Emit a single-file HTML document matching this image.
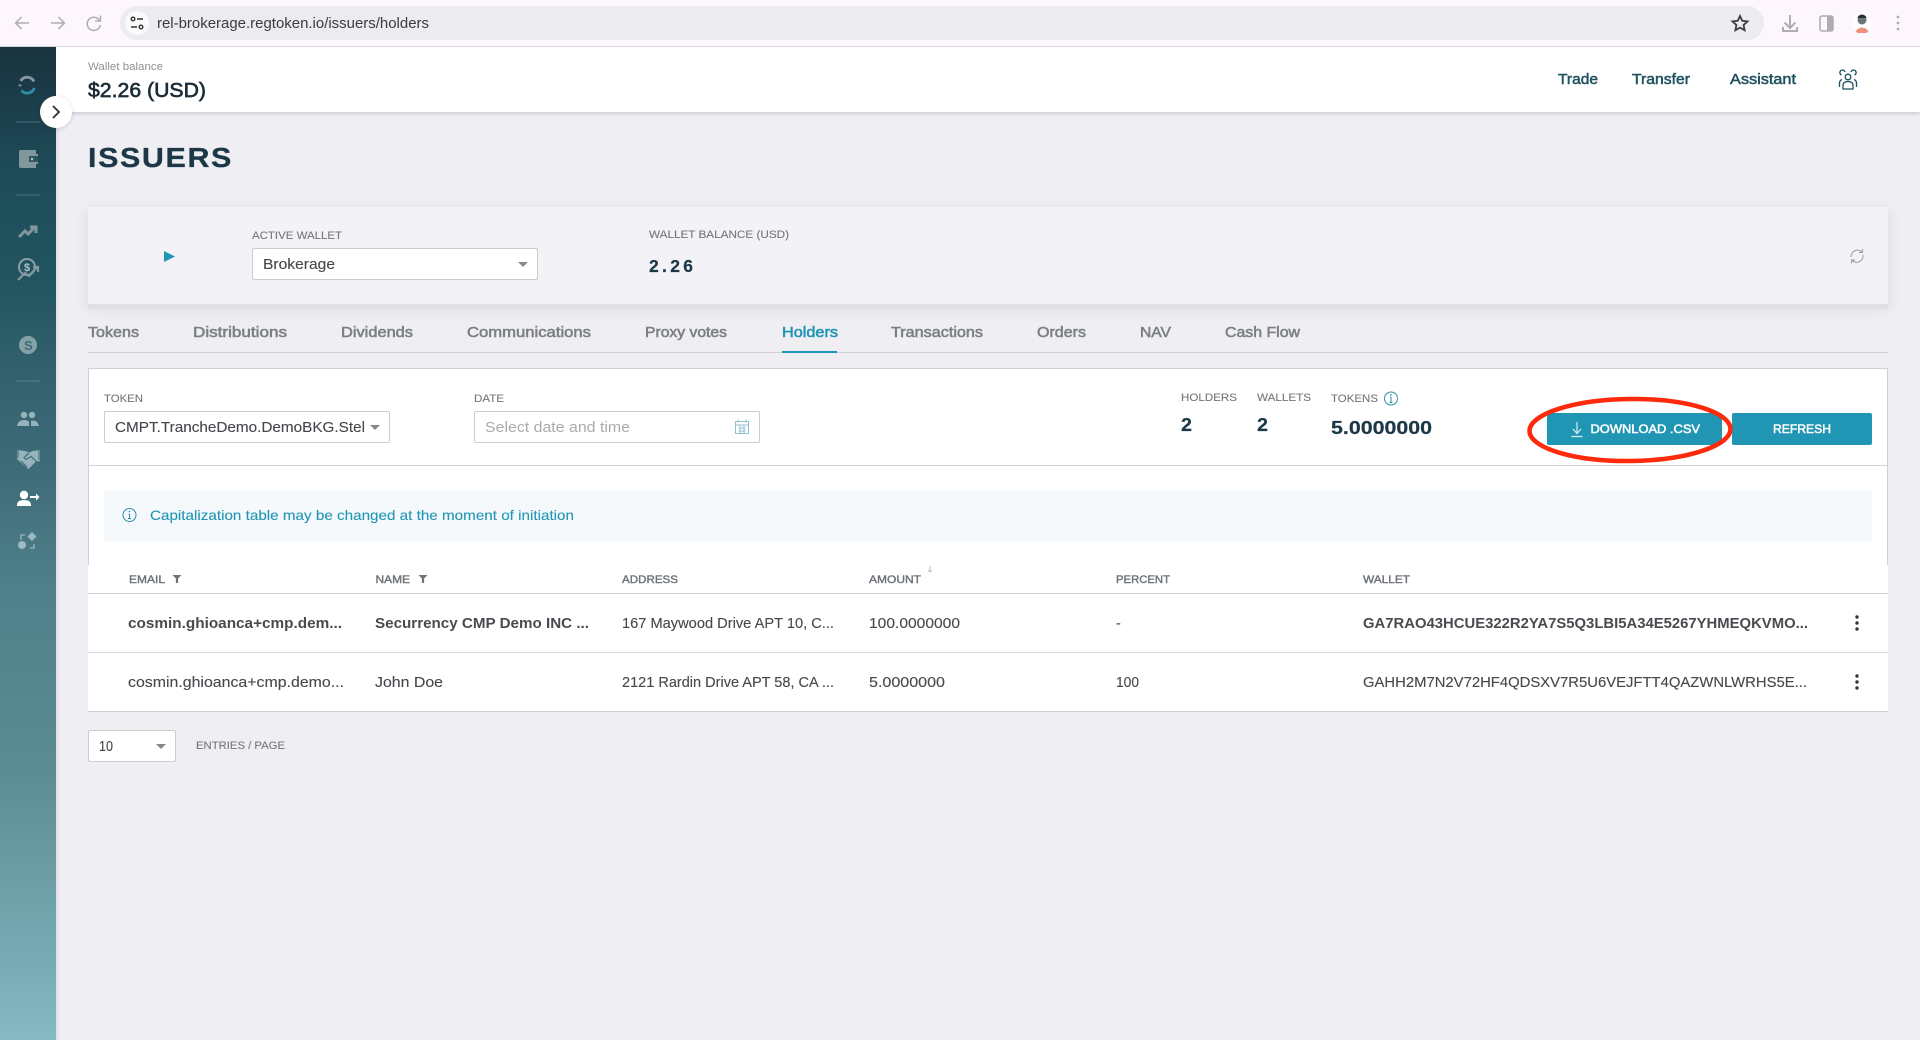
<!DOCTYPE html>
<html lang="en">
<head>
<meta charset="utf-8">
<title>Issuers - Holders</title>
<style>
html,body{margin:0;padding:0;width:1920px;height:1040px;overflow:hidden;background:#eeeef3;font-family:"Liberation Sans",sans-serif}
.a{position:absolute;box-sizing:border-box}
svg{position:absolute;left:0;top:0}
text{font-family:"Liberation Sans",sans-serif;font-size:14.5px;fill:#45484c;stroke:#45484c;stroke-width:.12}
.lbl{font-size:11px;fill:#74787c;stroke:#74787c;stroke-width:.12}
.tab{font-size:14.5px;fill:#7c8084;stroke:#7c8084;stroke-width:.55}
.th{font-size:11px;fill:#6e7378;stroke:#6e7378;stroke-width:.4}
.b{font-weight:bold;fill:#484b4f;stroke:none}
.num{font-weight:bold;fill:#1c3847;stroke:#1c3847;stroke-width:.2}
.nav{font-size:14.5px;fill:#1f5160;stroke:#1f5160;stroke-width:.5}
.btn{font-size:12px;fill:#fff;stroke:#fff;stroke-width:.5}
</style>
</head>
<body>
<div class="a" style="left:0;top:0;width:1920px;height:47px;background:#fdf6fd;border-bottom:1px solid #dcdbe0"></div>
<div class="a" style="left:120px;top:6px;width:1644px;height:34px;background:#ecebf0;border-radius:17px"></div>
<div class="a" style="left:0;top:47px;width:56px;height:993px;background:linear-gradient(180deg,#19343f 0,#1b3c49 50px,#1f4d5a 130px,#215460 230px,#33626e 330px,#3f6d79 430px,#4f808a 540px,#5a8c92 720px,#6b9ca3 820px,#78acb5 920px,#88bac4 1000px);box-shadow:2px 0 3px rgba(0,0,0,.08)"></div>
<div class="a" style="left:56px;top:47px;width:1864px;height:65px;background:#fff;box-shadow:0 2px 3px rgba(70,70,90,.18)"></div>
<div class="a" style="left:88px;top:207px;width:1800px;height:97px;background:#f3f2f7;box-shadow:0 5px 0 #e1e0e6,0 4px 14px rgba(70,70,90,.12)"></div>
<div class="a" style="left:252px;top:248px;width:286px;height:32px;background:#fff;border:1px solid #ccc;border-radius:2px"></div>
<div class="a" style="left:88px;top:352px;width:1800px;height:1px;background:#d2d2d6"></div>
<div class="a" style="left:782px;top:351px;width:55px;height:2px;background:#2196b4"></div>
<div class="a" style="left:88px;top:368px;width:1800px;height:197px;background:#fff;border:1px solid #d0d0d4;border-bottom:0"></div>
<div class="a" style="left:88px;top:465px;width:1800px;height:1px;background:#d0d0d4"></div>
<div class="a" style="left:104px;top:411px;width:286px;height:32px;background:#fff;border:1px solid #ccc;border-radius:2px"></div>
<div class="a" style="left:474px;top:411px;width:286px;height:32px;background:#fff;border:1px solid #ccc;border-radius:2px"></div>
<div class="a" style="left:1547px;top:413px;width:175px;height:32px;background:#2196b4;border-radius:2px"></div>
<div class="a" style="left:1732px;top:413px;width:140px;height:32px;background:#2196b4;border-radius:2px"></div>
<div class="a" style="left:104px;top:490px;width:1768px;height:51px;background:#f6f9fc"></div>
<div class="a" style="left:88px;top:565px;width:1800px;height:147px;background:#fff;border-bottom:1px solid #d0d0d4"></div>
<div class="a" style="left:88px;top:593px;width:1800px;height:1px;background:#d0d0d4"></div>
<div class="a" style="left:88px;top:652px;width:1800px;height:1px;background:#d8d8dc"></div>
<div class="a" style="left:88px;top:730px;width:88px;height:32px;background:#fff;border:1px solid #ccc;border-radius:2px"></div>

<svg width="1920" height="1040" viewBox="0 0 1920 1040" xmlns="http://www.w3.org/2000/svg">
<!-- browser toolbar -->
<g fill="none" stroke="#aeadb3" stroke-width="1.5">
<path d="M29 23H15.5M21.5 17l-6 6 6 6"/>
<path d="M51 23h13.5M58.5 17l6 6-6 6"/>
<path d="M99.5 20.5a6.6 6.6 0 1 0 .8 4.5"/><path d="M100.5 15.5v5.5h-5.5"/>
</g>
<circle cx="137" cy="23" r="12" fill="#fbf9fc"/>
<g fill="none" stroke="#333" stroke-width="1.4"><path d="M137 19h6M131 27h6"/><circle cx="133" cy="19" r="1.8"/><circle cx="141" cy="27" r="1.8"/></g>
<text x="157" y="28" textLength="272" lengthAdjust="spacingAndGlyphs" style="font-size:15px;fill:#3b3b40;stroke:none">rel-brokerage.regtoken.io/issuers/holders</text>
<path d="M1740 16l2.2 4.8 5.3.6-3.9 3.6 1 5.2-4.6-2.6-4.6 2.6 1-5.2-3.9-3.6 5.3-.6z" fill="none" stroke="#3c3c42" stroke-width="1.8"/>
<g fill="none" stroke="#aeadb3" stroke-width="2"><path d="M1790 15v13M1784.500 22.500l5.500 5.500 5.500-5.500M1783 27v4h14v-4"/></g>
<rect x="1820" y="16" width="13" height="15" rx="2" fill="#fdf6fd" stroke="#aeadb3" stroke-width="1.6"/><rect x="1827" y="16" width="6" height="15" fill="#aeadb3"/>
<circle cx="1862" cy="23" r="10" fill="#fff"/><circle cx="1862" cy="20" r="4.500" fill="#6b7478"/><path d="M1858 16.500q4-4 8 0l.5 1.500h-9z" fill="#2a3034"/><path d="M1855.500 31q6.500-7 13 0l-2 2h-9z" fill="#f0907a"/>
<g fill="#aeadb3"><circle cx="1898" cy="17" r="1.400"/><circle cx="1898" cy="23" r="1.400"/><circle cx="1898" cy="29" r="1.400"/></g>

<!-- sidebar icons -->
<path d="M34 81.500a7.500 7.500 0 0 0-13.300-.5" fill="none" stroke="#84989f" stroke-width="2.800"/>
<path d="M20 84.500v1.800" fill="none" stroke="#84989f" stroke-width="2.800"/>
<path d="M21.500 90.500a7.500 7.500 0 0 0 12.800-2.500" fill="none" stroke="#2f8ea6" stroke-width="2.800"/>
<path d="M16 122h24M16 195h24" stroke="#3f727e" stroke-width="1"/>
<path d="M21 150h15v4h2v10h-2v4H21a2 2 0 0 1-2-2v-14a2 2 0 0 1 2-2z" fill="#82969d"/><rect x="29" y="156" width="9" height="6" fill="#2a5562"/><circle cx="32" cy="159" r="1.300" fill="#a9bac0"/>
<path d="M19 237l6-6 3 3 6-6M30 227h6v6" fill="none" stroke="#82969d" stroke-width="3"/>
<circle cx="27" cy="267" r="8" fill="none" stroke="#8a9fa6" stroke-width="2"/><text x="24" y="271" style="font-size:11px;fill:#b3c2c7;stroke:none;font-weight:bold">$</text><path d="M18 280l7-7 4 3 8-9M33 267h5v5" fill="none" stroke="#84989f" stroke-width="2.200"/>
<circle cx="28" cy="345" r="9" fill="#85a1a8"/><text x="24" y="350" style="font-size:13px;fill:#3f6c77;stroke:none;font-weight:bold">S</text>
<path d="M17 381h23" stroke="#6d98a0" stroke-width="1" stroke-dasharray="1.500 1"/>
<g fill="#94b3ba"><circle cx="24" cy="415" r="3.200"/><circle cx="32" cy="415" r="3.200"/><path d="M17 426q1-6 7-6 4 0 5 2v4zM31 426v-5q6-2 8 5z"/></g>
<path d="M17 450l8 1 4 1.500 4-1.500 7-1v11l-4 .5-7.500 7.500-6-5-5.500-5z" fill="#94b3ba"/><path d="M29 453l-5 4.500 2 2 5-3 6.500 6M21 461l6 6M18 450v8M39 450v10" fill="none" stroke="#44727d" stroke-width="1.200"/>
<g fill="#fff"><circle cx="24" cy="495" r="4.200"/><path d="M17 505q0-5 7-5 7 0 7 5v1H17z"/><path d="M30 496h6v-2.500l3.500 3.500-3.500 3.500V498h-6z"/></g>
<g fill="#9dbac0"><path d="M32 532l4.500 4.500-4.500 4.500-4.500-4.500z"/><circle cx="22" cy="545" r="4"/></g><path d="M21 540v-5h4M30 548h4v-4" fill="none" stroke="#9dbac0" stroke-width="1.300"/>

<!-- toggle -->
<circle cx="56" cy="112" r="16" fill="#fff" style="filter:drop-shadow(0 1px 2px rgba(0,0,0,.15))"/>
<path d="M53 106l6 6-6 6" fill="none" stroke="#28323a" stroke-width="1.800"/>

<!-- header -->
<text x="88" y="70" textLength="75" lengthAdjust="spacingAndGlyphs" style="font-size:11px;fill:#8f9296;stroke:none">Wallet balance</text>
<text x="88" y="97" textLength="118" lengthAdjust="spacingAndGlyphs" style="font-size:20px;fill:#1c2d38;stroke:#1c2d38;stroke-width:.65">$2.26 (USD)</text>
<text class="nav" x="1558" y="84" textLength="40" lengthAdjust="spacingAndGlyphs">Trade</text>
<text class="nav" x="1632" y="84" textLength="58" lengthAdjust="spacingAndGlyphs">Transfer</text>
<text class="nav" x="1730" y="84" textLength="66" lengthAdjust="spacingAndGlyphs">Assistant</text>
<g fill="none" stroke="#1f5160" stroke-width="1.300"><circle cx="1848" cy="77" r="2.800"/><path d="M1843 89v-3.500q0-4 5-4t5 4v3.500z"/><path d="M1845 72a2.600 2.600 0 1 0-3.500 3M1851 72a2.600 2.600 0 1 1 3.500 3M1839.500 87v-4q0-2.500 2.500-3.500M1856.500 87v-4q0-2.500-2.500-3.500"/></g>

<!-- title -->
<text x="88" y="167" textLength="145" lengthAdjust="spacingAndGlyphs" style="font-size:28px;font-weight:bold;fill:#1c3847;stroke:#1c3847;stroke-width:.3;letter-spacing:1.5px">ISSUERS</text>

<!-- wallet card -->
<path d="M164 251v11l11-5.500z" fill="#2196b4"/>
<text class="lbl" x="252" y="239" textLength="90" lengthAdjust="spacingAndGlyphs">ACTIVE WALLET</text>
<text x="263" y="269" textLength="72" lengthAdjust="spacingAndGlyphs">Brokerage</text>
<path d="M518 262h10l-5 5z" fill="#85878a"/>
<text class="lbl" x="649" y="238" textLength="140" lengthAdjust="spacingAndGlyphs">WALLET BALANCE (USD)</text>
<text class="num" x="649" y="272" textLength="44" lengthAdjust="spacing" style="font-size:17.500px">2.26</text>
<g fill="none" stroke="#9a9b9f" stroke-width="1"><path d="M1851 257a6.500 6.500 0 0 1 11-5M1863 255a6.500 6.500 0 0 1-11 5.500"/><path d="M1862.500 249v3.500h-3.500M1851.500 263.500V260h3.500"/></g>

<!-- tabs -->
<text class="tab" x="88" y="337" textLength="51" lengthAdjust="spacingAndGlyphs">Tokens</text>
<text class="tab" x="193" y="337" textLength="94" lengthAdjust="spacingAndGlyphs">Distributions</text>
<text class="tab" x="341" y="337" textLength="72" lengthAdjust="spacingAndGlyphs">Dividends</text>
<text class="tab" x="467" y="337" textLength="124" lengthAdjust="spacingAndGlyphs">Communications</text>
<text class="tab" x="645" y="337" textLength="82" lengthAdjust="spacingAndGlyphs">Proxy votes</text>
<text class="tab" x="782" y="337" textLength="56" lengthAdjust="spacingAndGlyphs" style="fill:#2196b4;stroke:#2196b4">Holders</text>
<text class="tab" x="891" y="337" textLength="92" lengthAdjust="spacingAndGlyphs">Transactions</text>
<text class="tab" x="1037" y="337" textLength="49" lengthAdjust="spacingAndGlyphs">Orders</text>
<text class="tab" x="1140" y="337" textLength="31" lengthAdjust="spacingAndGlyphs">NAV</text>
<text class="tab" x="1225" y="337" textLength="75" lengthAdjust="spacingAndGlyphs">Cash Flow</text>

<!-- filters -->
<text class="lbl" x="104" y="402" textLength="39" lengthAdjust="spacingAndGlyphs">TOKEN</text>
<text x="115" y="432" textLength="250" lengthAdjust="spacingAndGlyphs">CMPT.TrancheDemo.DemoBKG.Stel</text>
<path d="M370 425h10l-5 5z" fill="#85878a"/>
<text class="lbl" x="474" y="402" textLength="30" lengthAdjust="spacingAndGlyphs">DATE</text>
<text x="485" y="432" textLength="145" lengthAdjust="spacingAndGlyphs" style="fill:#a9abae;stroke:none">Select date and time</text>
<g fill="none" stroke="#8fc2d0" stroke-width="1"><rect x="735.500" y="421.500" width="13" height="12"/><path d="M735.500 425h13M738 419.500v3M746 419.500v3M738.500 428h7M738.500 431h7M740 425v8M744 425v8"/></g>
<text class="lbl" x="1181" y="401" textLength="56" lengthAdjust="spacingAndGlyphs">HOLDERS</text>
<text class="num" x="1181" y="431" textLength="11" lengthAdjust="spacingAndGlyphs" style="font-size:18px">2</text>
<text class="lbl" x="1257" y="401" textLength="54" lengthAdjust="spacingAndGlyphs">WALLETS</text>
<text class="num" x="1257" y="431" textLength="11" lengthAdjust="spacingAndGlyphs" style="font-size:18px">2</text>
<text class="lbl" x="1331" y="402" textLength="47" lengthAdjust="spacingAndGlyphs">TOKENS</text>
<g fill="none" stroke="#2f8ea6" stroke-width="1"><circle cx="1391" cy="398.500" r="6.500"/><path d="M1391 397v5M1389.500 402.500h3M1390 397h1"/></g><circle cx="1391" cy="394.800" r=".8" fill="#2f8ea6"/>
<text class="num" x="1331" y="434" textLength="101" lengthAdjust="spacingAndGlyphs" style="font-size:18px">5.0000000</text>

<!-- buttons -->
<path d="M1577 422v11M1573 429l4 4.500 4-4.500M1571.500 436.500h11" fill="none" stroke="#d8edf2" stroke-width="1.200"/>
<text class="btn" x="1590.500" y="433" textLength="109.500" lengthAdjust="spacingAndGlyphs">DOWNLOAD .CSV</text>
<text class="btn" x="1773" y="433" textLength="58" lengthAdjust="spacingAndGlyphs">REFRESH</text>
<ellipse cx="1630" cy="430" rx="100.500" ry="31" fill="none" stroke="#ff2a0c" stroke-width="4.500" transform="rotate(-.6 1630 430)"/>

<!-- notice -->
<g fill="none" stroke="#2f8ea6" stroke-width="1"><circle cx="129.500" cy="515" r="6.500"/><path d="M129.500 514v4.500M128 518.500h3M128.500 514h1"/></g><circle cx="129.500" cy="511.500" r=".8" fill="#2f8ea6"/>
<text x="150" y="520" textLength="424" lengthAdjust="spacingAndGlyphs" style="fill:#2196b4;stroke:#2196b4;font-size:14px">Capitalization table may be changed at the moment of initiation</text>

<!-- table head -->
<text class="th" x="129" y="583" textLength="36" lengthAdjust="spacingAndGlyphs">EMAIL</text>
<path d="M172.500 575h9l-3.400 3.500v4.500h-2.200v-4.500z" fill="#6e7378"/>
<text class="th" x="375.500" y="583" textLength="34.500" lengthAdjust="spacingAndGlyphs">NAME</text>
<path d="M418.500 575h9l-3.400 3.500v4.500h-2.200v-4.500z" fill="#6e7378"/>
<text class="th" x="622" y="583" textLength="56" lengthAdjust="spacingAndGlyphs">ADDRESS</text>
<text class="th" x="869" y="583" textLength="52" lengthAdjust="spacingAndGlyphs">AMOUNT</text>
<path d="M930 566v6M928 570l2 2 2-2" fill="none" stroke="#a9b7bd" stroke-width=".8"/>
<text class="th" x="1116" y="583" textLength="54" lengthAdjust="spacingAndGlyphs">PERCENT</text>
<text class="th" x="1363" y="583" textLength="47" lengthAdjust="spacingAndGlyphs">WALLET</text>

<!-- row 1 -->
<text class="b" x="128" y="628" textLength="214" lengthAdjust="spacingAndGlyphs">cosmin.ghioanca+cmp.dem...</text>
<text class="b" x="375" y="628" textLength="214" lengthAdjust="spacingAndGlyphs">Securrency CMP Demo INC ...</text>
<text x="622" y="628" textLength="212" lengthAdjust="spacingAndGlyphs">167 Maywood Drive APT 10, C...</text>
<text x="869" y="628" textLength="91" lengthAdjust="spacingAndGlyphs">100.0000000</text>
<text x="1116" y="628">-</text>
<text class="b" x="1363" y="628" textLength="445" lengthAdjust="spacingAndGlyphs">GA7RAO43HCUE322R2YA7S5Q3LBI5A34E5267YHMEQKVMO...</text>
<g fill="#33363a"><circle cx="1857" cy="617" r="1.700"/><circle cx="1857" cy="623" r="1.700"/><circle cx="1857" cy="629" r="1.700"/></g>

<!-- row 2 -->
<text x="128" y="687" textLength="216" lengthAdjust="spacingAndGlyphs">cosmin.ghioanca+cmp.demo...</text>
<text x="375" y="687" textLength="68" lengthAdjust="spacingAndGlyphs">John Doe</text>
<text x="622" y="687" textLength="212" lengthAdjust="spacingAndGlyphs">2121 Rardin Drive APT 58, CA ...</text>
<text x="869" y="687" textLength="76" lengthAdjust="spacingAndGlyphs">5.0000000</text>
<text x="1116" y="687" textLength="23" lengthAdjust="spacingAndGlyphs">100</text>
<text x="1363" y="687" textLength="444" lengthAdjust="spacingAndGlyphs">GAHH2M7N2V72HF4QDSXV7R5U6VEJFTT4QAZWNLWRHS5E...</text>
<g fill="#33363a"><circle cx="1857" cy="676" r="1.700"/><circle cx="1857" cy="682" r="1.700"/><circle cx="1857" cy="688" r="1.700"/></g>

<!-- footer -->
<text x="99" y="751" textLength="14" lengthAdjust="spacingAndGlyphs">10</text>
<path d="M156 744h10l-5 5z" fill="#85878a"/>
<text class="lbl" x="196" y="749" textLength="89" lengthAdjust="spacingAndGlyphs">ENTRIES / PAGE</text>
</svg>
</body>
</html>
